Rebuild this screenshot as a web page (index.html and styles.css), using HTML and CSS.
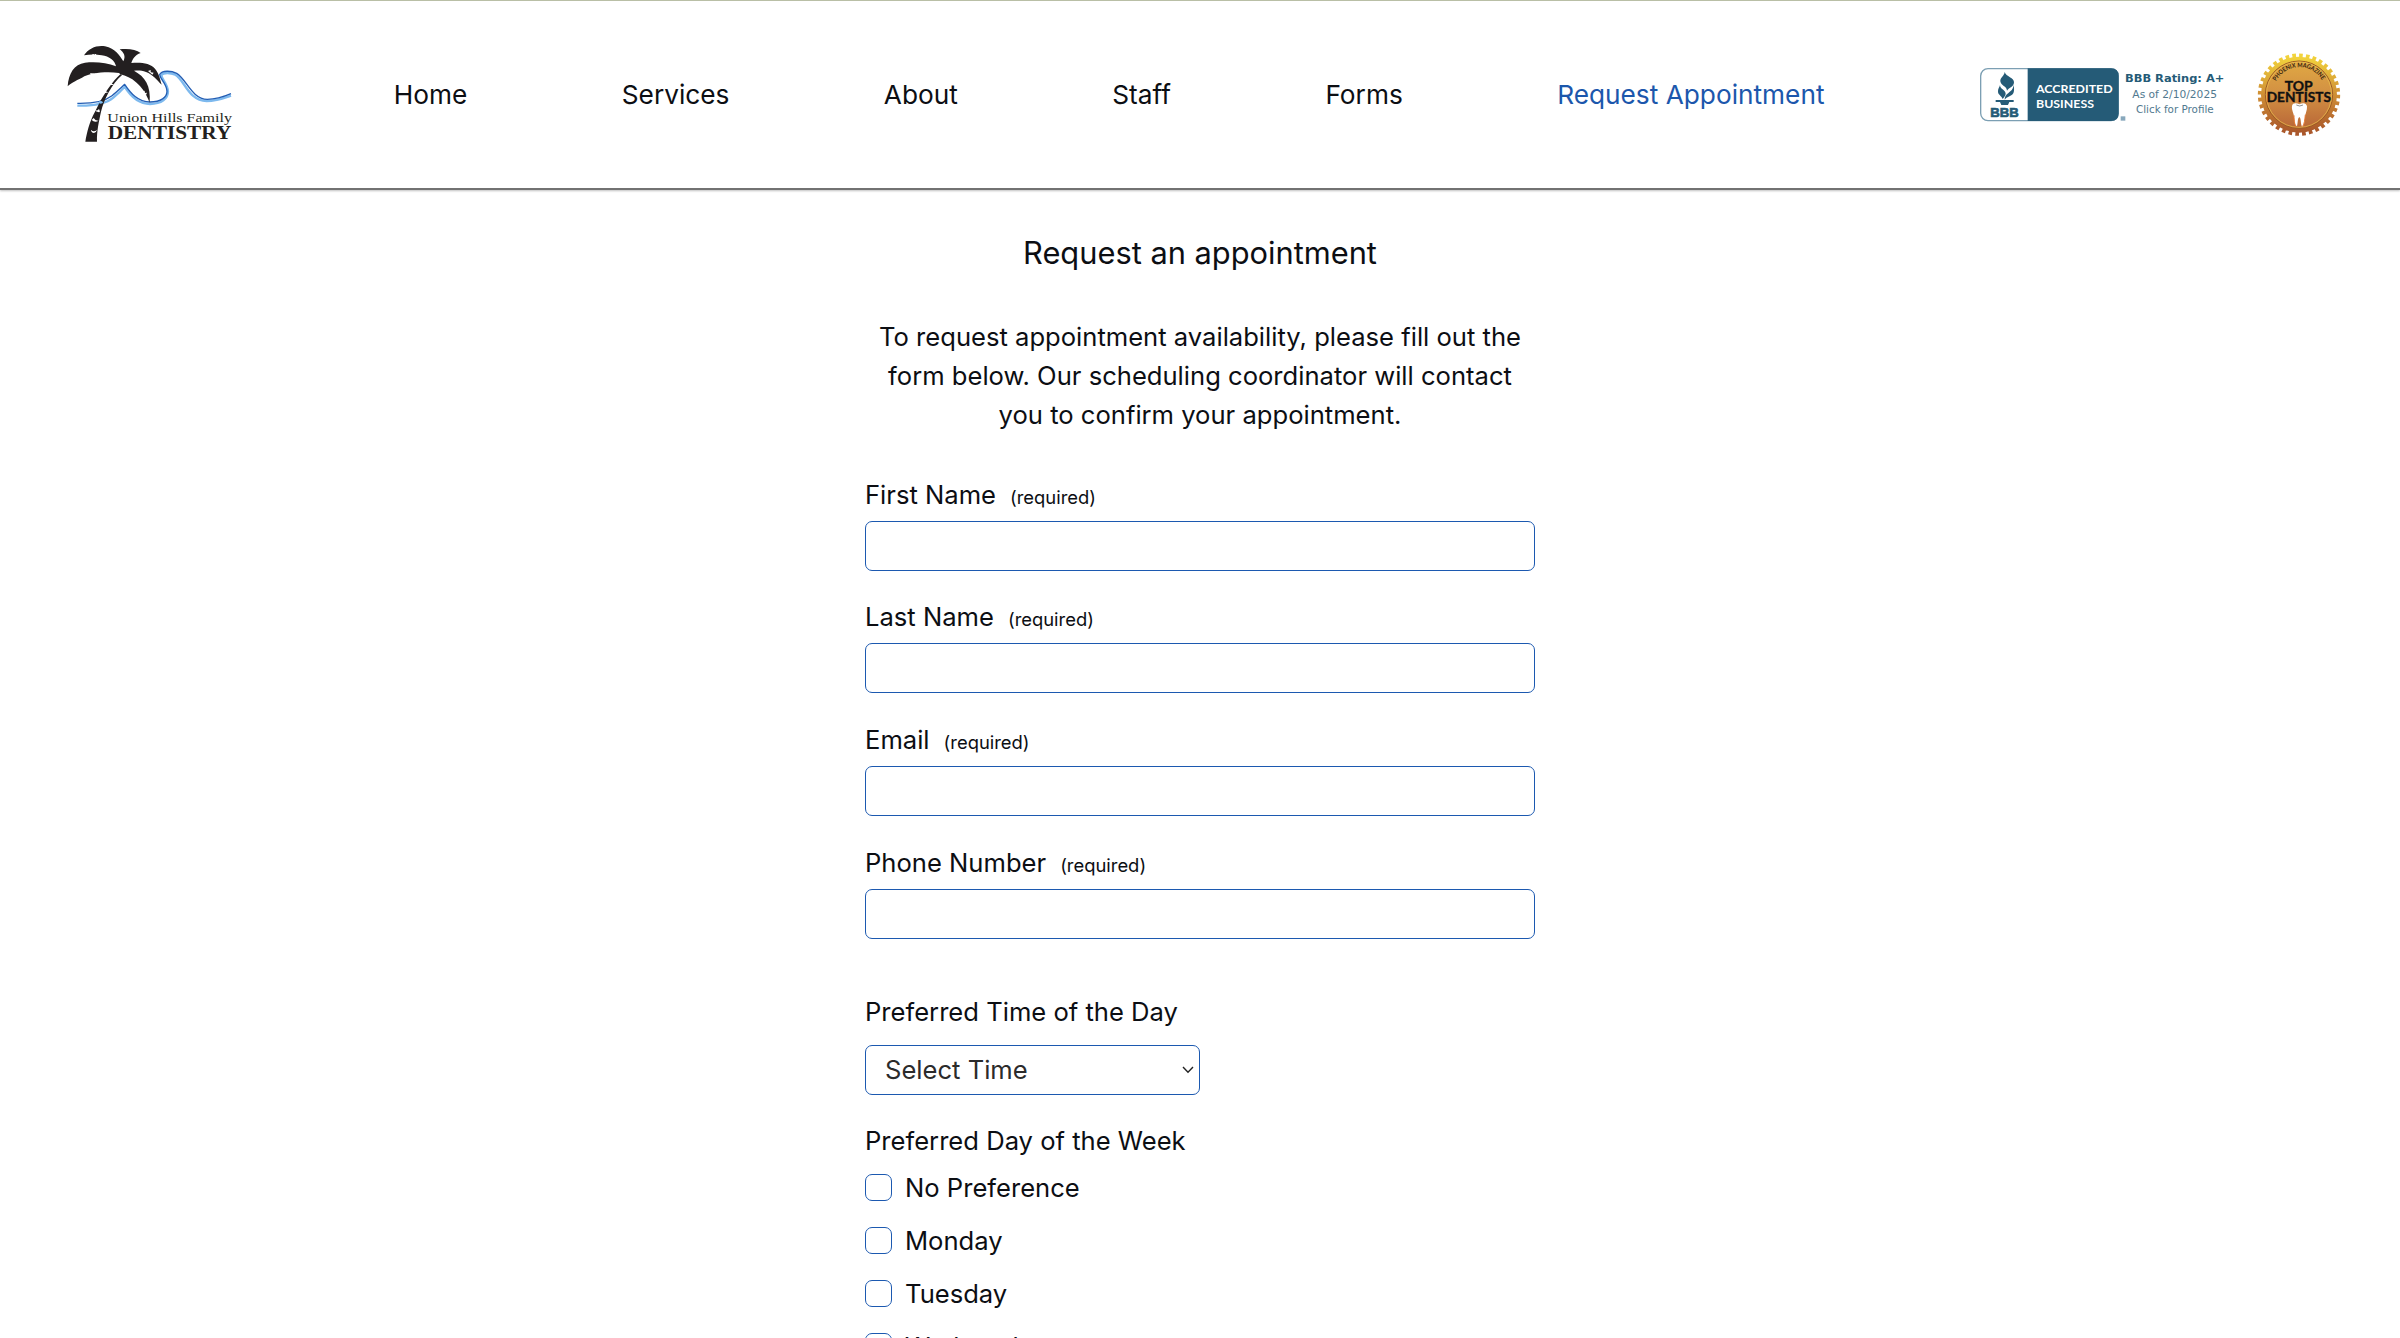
FILE: index.html
```html
<!DOCTYPE html>
<html lang="en">
<head>
<meta charset="utf-8">
<title>Request Appointment | Union Hills Family Dentistry</title>
<link rel="stylesheet" href="styles.css">
</head>
<body>
<header class="header">
  <a class="logo">
    <svg viewBox="0 0 600 390" width="200" height="130" role="img" aria-label="Union Hills Family Dentistry">
      <g fill="none" stroke-linejoin="round">
        <path d="M82 227 C125 228 165 224 190 203 C204 191 214 181 224 170 C240 196 262 222 300 222 C335 222 354 206 354 184 C352 160 335 148 334 136 C340 126 362 128 376 134 C404 150 415 212 470 213 C500 213 520 205 543 197" stroke="#7db9ee" stroke-width="7"/>
        <path d="M82 220 C125 221 160 217 186 197 C200 186 212 174 224 163 C242 190 264 216 300 216 C333 216 351 202 351 184 C350 160 330 148 329 134 C336 120 364 122 380 130 C410 148 425 207 472 208 C500 208 522 200 543 191" stroke="#235eb4" stroke-width="4"/>
      </g>
      <g fill="#231f20">
        <path d="M211 133 C188 153 166 188 151 213 L135 245 C118 276 111 306 106 335 L141 335 C140 302 147 274 153 245 C162 209 184 162 217 134 Z"/>
        <path d="M207 129 C170 124 120 128 96 143 C75 153 62 160 53 169 C56 130 72 103 105 98 C137 94 170 98 198 109 C195 92 178 79 155 76 C137 72 118 73 102 76 C116 55 140 45 165 49 C196 55 210 78 220 94 C228 80 222 67 209 58 C235 55 258 58 272 69 C255 75 248 87 244 99 C270 96 302 99 315 116 C328 132 330 148 335 164 C320 150 309 134 288 126 C274 120 262 121 252 122 C285 140 303 166 299 218 C288 190 276 172 258 157 C244 144 228 137 211 133 Z"/>
      </g>
      <g fill="#fff">
        <path d="M120 129 l5 8 2-5 5 9 3-11 5 2 z M126 73 l4 5 3-7 4 7 2-6 z M276 185 l8-3 0 7 7-1 -3 7 z M294 123 l8-3 0 7 9 1 -4 6 z"/>
        <path d="M180 158 l13 7 -12 0 z M162 182 l13 5 -12 3 z M147 237 q5 10 0 10 q-9-2-13-6 q8 2 13-4 z M131 264 q5 9 15 8 q-12 7-21-2 z M123 299 q8 9 18 0 q-2 8-9 10 q-9-2-9-10 z"/>
        <ellipse cx="152" cy="217" rx="6" ry="4" fill="#7db9ee"/>
      </g>
      <text class="logo-name" x="172" y="275" textLength="374" lengthAdjust="spacingAndGlyphs">Union Hills Family</text>
      <text class="logo-type" x="173" y="326" textLength="371" lengthAdjust="spacingAndGlyphs">DENTISTRY</text>
    </svg>
  </a>
  <nav class="nav">
    <a>Home</a><a>Services</a><a>About</a><a>Staff</a><a>Forms</a><a class="current">Request Appointment</a>
  </nav>
  <div class="badges">
    <svg viewBox="0 0 810 270" width="270" height="90" role="img" aria-label="BBB Accredited Business">
      <rect x="32" y="56" width="413" height="156" rx="22" fill="#fff" stroke="#7c9fb3" stroke-width="4"/>
      <path d="M173 55 H423 Q446 55 446 78 V190 Q446 213 423 213 H173 Z" fill="#255b77"/>
      <g fill="#255b77">
        <path d="M104 66 C107 80 134 83 132 98 C130 112 116 112 111 122 C110 108 93 108 91 94 C90 82 103 78 104 66 Z"/>
        <path d="M90 105 C90 118 108 120 107 132 C106 139 101 143 98 147 C94 136 83 135 84 123 C84 115 89 112 90 105 Z"/>
        <path d="M131 104 C134 124 132 132 120 138 C111 142 107 145 104 149 C104 135 114 131 121 124 C128 118 130 112 131 104 Z"/>
        <path d="M77 150 H131 V156 H118 L114 165 H94 L90 156 H77 Z"/>
        <rect x="452" y="199" width="14" height="13" fill="#88a8bc"/>
      </g>
      <text class="bbb-mark" x="61" y="202" textLength="85" lengthAdjust="spacingAndGlyphs">BBB</text>
      <text class="bbb-label" x="198" y="130" textLength="230" lengthAdjust="spacingAndGlyphs">ACCREDITED</text>
      <text class="bbb-label" x="198" y="173" textLength="174" lengthAdjust="spacingAndGlyphs">BUSINESS</text>
      <text class="bbb-rating" x="465" y="96" textLength="298" lengthAdjust="spacingAndGlyphs">BBB Rating: A+</text>
      <text class="bbb-note" x="487" y="144" textLength="254" lengthAdjust="spacingAndGlyphs">As of 2/10/2025</text>
      <text class="bbb-note" x="498" y="188" textLength="233" lengthAdjust="spacingAndGlyphs">Click for Profile</text>
    </svg>
    <svg viewBox="0 0 360 330" width="120" height="110" role="img" aria-label="Phoenix Magazine Top Dentists">
      <defs>
        <linearGradient id="gold" x1="0" y1="0" x2="0" y2="1"><stop offset="0" stop-color="#f2d43c"/><stop offset=".5" stop-color="#cf8e35"/><stop offset="1" stop-color="#a9562b"/></linearGradient>
        <linearGradient id="face" x1="0" y1="0" x2="0" y2="1"><stop offset="0" stop-color="#e0a944"/><stop offset=".5" stop-color="#d28f42"/><stop offset="1" stop-color="#b96738"/></linearGradient>
        <path id="arc" d="M108 124 A79 79 0 0 1 248 124"/>
      </defs>
      <circle cx="177" cy="164" r="114" fill="url(#gold)"/>
      <circle cx="177" cy="164" r="117" fill="none" stroke="url(#gold)" stroke-width="13" stroke-dasharray="11 9.4"/>
      <circle cx="177" cy="164" r="101" fill="url(#face)" stroke="#9c5a25" stroke-width="3"/>
      <circle cx="177" cy="164" r="98" fill="none" stroke="#efc44d" stroke-width="2"/>
      <text class="seal-arc"><textPath href="#arc" textLength="168" lengthAdjust="spacingAndGlyphs">PHOENIX MAGAZINE</textPath></text>
      <path d="M156 198 C158 187 170 189 178 193 C187 188 199 187 201 199 C202 212 196 220 195 232 C194 246 192 258 186 260 C181 250 184 235 178 231 C172 235 174 250 171 259 C164 257 164 246 162 232 C162 219 154 211 156 198 Z" fill="#fff"/>
      <path d="M162 226 C162 248 165 256 170 260 M188 259 C193 252 195 238 196 224" fill="none" stroke="#e6762f" stroke-width="3"/>
      <path d="M169 195 q10 6 20 0" fill="none" stroke="#555" stroke-width="2"/>
      <text class="seal-title" x="134" y="154" textLength="84" lengthAdjust="spacingAndGlyphs">TOP</text>
      <text class="seal-title" x="80" y="186" textLength="193" lengthAdjust="spacingAndGlyphs">DENTISTS</text>
    </svg>
  </div>
</header>
<main class="main">
  <h1 class="title">Request an appointment</h1>
  <p class="intro">To request appointment availability, please fill out the<br>form below. Our scheduling coordinator will contact<br>you to confirm your appointment.</p>
  <form class="form">
    <div class="field"><label for="first"><span>First Name</span><small>(required)</small></label><input id="first" type="text"></div>
    <div class="field"><label for="last"><span>Last Name</span><small>(required)</small></label><input id="last" type="text"></div>
    <div class="field"><label for="email"><span>Email</span><small>(required)</small></label><input id="email" type="email"></div>
    <div class="field"><label for="phone"><span>Phone Number</span><small>(required)</small></label><input id="phone" type="tel"></div>
    <div class="time">
      <label>Preferred Time of the Day</label>
      <div class="select" role="combobox"><span>Select Time</span>
        <svg width="12" height="8" viewBox="0 0 12 8"><path d="M1 1 L6 6.2 L11 1" fill="none" stroke="#222" stroke-width="1.4"/></svg>
      </div>
    </div>
    <fieldset class="days">
      <legend>Preferred Day of the Week</legend>
      <label class="day"><input type="checkbox"><span>No Preference</span></label>
      <label class="day"><input type="checkbox"><span>Monday</span></label>
      <label class="day"><input type="checkbox"><span>Tuesday</span></label>
      <label class="day"><input type="checkbox"><span>Wednesday</span></label>
    </fieldset>
  </form>
</main>
</body>
</html>
```
FILE: styles.css
```css
* { box-sizing: border-box; }

body {
  margin: 0;
  height: 1338px;
  overflow: hidden;
  background: #fff;
  color: #0c0e13;
  font-family: Inter, "Liberation Sans", sans-serif;
  font-size: 25.6px;
  font-weight: 400;
}

.header {
  display: flex;
  align-items: center;
  height: 190px;
  padding: 0 40px 0 50px;
  border-top: 1px solid #b9bfa6;
  border-bottom: 2px solid #727272;
  box-shadow: 0 1px 2px rgba(0, 0, 0, .25);
}
.header svg { display: block; }

.nav {
  display: flex;
  gap: 154.4px;
  margin-left: 143.8px;
  padding-top: 1px;
  font-size: 26.25px;
  line-height: 40px;
  white-space: nowrap;
}
.nav .current { color: #1c57ac; }

.badges { display: flex; align-items: center; margin-left: auto; }

.logo-name { font: 400 40px "Liberation Serif", serif; fill: #231f20; }
.logo-type { font: 700 56px "Liberation Serif", serif; fill: #231f20; }
.bbb-mark { font: 700 38px "Liberation Sans", sans-serif; fill: #255b77; stroke: #255b77; stroke-width: 2px; }
.bbb-label { font: 700 34px Lato, sans-serif; fill: #fff; }
.bbb-rating { font: 700 32px "DejaVu Sans", sans-serif; fill: #255b77; }
.bbb-note { font: 400 29px "DejaVu Sans", sans-serif; fill: #51798f; }
.seal-arc { font: 700 19px Lato, sans-serif; fill: #33210d; }
.seal-title { font: 700 38px Lato, sans-serif; fill: #111; stroke: #111; stroke-width: 1px; }

.main { width: 670px; margin: 0 auto; }

.title {
  margin: 43px 0 0;
  font-size: 30.8px;
  font-weight: 400;
  line-height: 40px;
  text-align: center;
}
.intro {
  margin: 44px 0 0;
  line-height: 39.2px;
  text-align: center;
  white-space: nowrap;
}

.form { margin-top: 40px; }
.field { height: 122.8px; }
.field label { display: flex; align-items: baseline; gap: 14px; height: 40px; line-height: 40px; }
.field small { font-size: 18.4px; }
.field input {
  display: block;
  width: 100%;
  height: 50px;
  margin-top: 6px;
  border: 1.5px solid #1c59b0;
  border-radius: 7px;
  background: #fff;
}

.time { margin-top: 26px; line-height: 40px; }
.time label { display: block; }
.select {
  display: flex;
  align-items: center;
  justify-content: space-between;
  width: 335px;
  height: 50px;
  margin-top: 13.6px;
  padding: 0 5px 0 19px;
  border: 1.5px solid #1c59b0;
  border-radius: 7px;
  color: #2b2b2b;
}

.days { margin: 26px 0 0; padding: 0; border: 0; }
.days legend { padding: 0; line-height: 40px; }
.day { display: flex; align-items: center; gap: 13px; height: 52.8px; }
.day input {
  appearance: none;
  width: 27px;
  height: 27px;
  margin: 0;
  border: 1.5px solid #1c59b0;
  border-radius: 7px;
}
```
